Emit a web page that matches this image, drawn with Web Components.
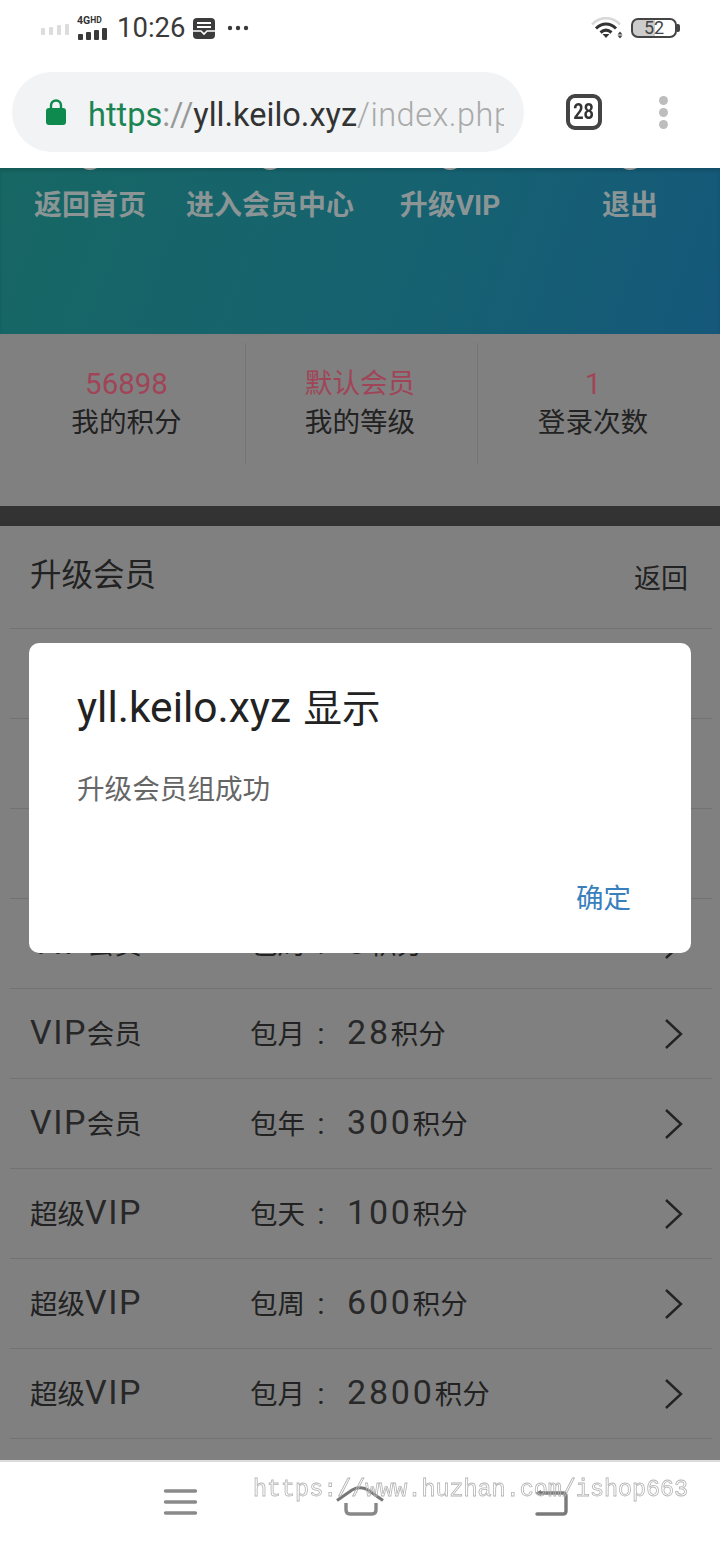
<!DOCTYPE html>
<html lang="zh">
<head>
<meta charset="utf-8">
<title>升级会员</title>
<style>
  html, body { margin: 0; padding: 0; background: #fff; }
  body {
    width: 720px;
    height: 1544px;
    overflow: hidden;
    font-family: Roboto, "Noto Sans CJK SC", sans-serif;
  }
  app-shell { color: #222; }
</style>
</head>
<body>
<app-shell>
  <status-bar slot="top"></status-bar>
  <url-bar slot="top"></url-bar>

  <member-banner>
    <banner-link>返回首页</banner-link>
    <banner-link>进入会员中心</banner-link>
    <banner-link>升级VIP</banner-link>
    <banner-link>退出</banner-link>
  </member-banner>

  <stat-panel>
    <stat-item value="56898" latin>我的积分</stat-item>
    <stat-item value="默认会员">我的等级</stat-item>
    <stat-item value="1" latin>登录次数</stat-item>
  </stat-panel>

  <plan-list>
    <plan-row empty></plan-row>
    <plan-row empty></plan-row>
    <plan-row empty></plan-row>
    <plan-row tier="VIP" suffix="会员" period="包周" points="8"></plan-row>
    <plan-row tier="VIP" suffix="会员" period="包月" points="28"></plan-row>
    <plan-row tier="VIP" suffix="会员" period="包年" points="300"></plan-row>
    <plan-row prefix="超级" tier="VIP" period="包天" points="100"></plan-row>
    <plan-row prefix="超级" tier="VIP" period="包周" points="600"></plan-row>
    <plan-row prefix="超级" tier="VIP" period="包月" points="2800"></plan-row>
  </plan-list>

  <alert-dialog slot="over" host="yll.keilo.xyz" label="显示" action="确定">升级会员组成功</alert-dialog>
  <bottom-nav slot="bottom"></bottom-nav>
</app-shell>

<script>
class AppShell extends HTMLElement {
  constructor() {
    super();
    this.attachShadow({ mode: "open" });
    this.shadowRoot.innerHTML = `
      <style>
        :host { display: flex; flex-direction: column; width: 720px; height: 1544px; position: relative; }
        #page { flex: 1; background: #808080; overflow: hidden; }
      </style>
      <slot name="top"></slot>
      <div id="page"><slot></slot></div>
      <slot name="over"></slot>
      <slot name="bottom"></slot>
    `;
  }
}

class StatusBar extends HTMLElement {
  constructor() {
    super();
    this.attachShadow({ mode: "open" });
    this.shadowRoot.innerHTML = `
      <style>
        :host { display: flex; align-items: center; justify-content: space-between; height: 56px; padding: 0 40px 0 41px; background: #fff; }
        .side { display: flex; align-items: center; }
        #net { display: flex; flex-direction: column; align-items: flex-start; margin-left: 8px; margin-top: -2px; }
        #label { font: 700 10.500px/10px Roboto, sans-serif; color: #333; margin-bottom: 2px; }
        #label small { font-size: 8.500px; vertical-align: 1px; }
        #time { font: 400 27.500px/32px Roboto, sans-serif; color: #3a3a3a; margin-left: 10px; }
        svg { display: block; }
      </style>
      <div class="side">
        <svg style="margin-top:3px" width="28" height="11" viewBox="0 0 28 11"><g fill="#dcdcdc"><rect x="0" y="4" width="4" height="7" rx="1"/><rect x="8" y="3" width="4" height="8" rx="1"/><rect x="16" y="1" width="4" height="10" rx="1"/><rect x="24" y="0" width="4" height="11" rx="1"/></g></svg>
        <div id="net">
          <span id="label">4G<small>HD</small></span>
          <svg width="30" height="12" viewBox="0 0 30 12"><g fill="#3a3a3a"><rect x="1" y="6" width="5" height="6" rx="1"/><rect x="9" y="4" width="5" height="8" rx="1"/><rect x="17" y="2" width="5" height="10" rx="1"/><rect x="25" y="0" width="5" height="12" rx="1"/></g></svg>
        </div>
        <span id="time">10:26</span>
        <svg style="margin-left:8px" width="22" height="21" viewBox="0 0 22 21"><rect width="22" height="21" rx="4" fill="#3c3c3c"/><path d="M4 5h14M4 9h14" stroke="#fff" stroke-width="2"/><path d="M0 13h8l3 3 3-3h8" fill="none" stroke="#fff" stroke-width="1.600"/></svg>
        <svg style="margin-left:12px" width="22" height="6" viewBox="0 0 22 6"><g fill="#3a3a3a"><circle cx="3" cy="3" r="2.200"/><circle cx="11" cy="3" r="2.200"/><circle cx="19" cy="3" r="2.200"/></g></svg>
      </div>
      <div class="side">
        <svg width="33" height="22" viewBox="0 0 33 22">
          <path d="M1 7.500C9-1 21-1 29 7.500" fill="none" stroke="#d8d8d8" stroke-width="2.500"/>
          <path d="M5 11.500C11 5.500 19 5.500 25 11.500" fill="none" stroke="#333" stroke-width="3"/>
          <path d="M9.500 15.500C13 12.500 17 12.500 20.500 15.500" fill="none" stroke="#333" stroke-width="3"/>
          <path d="M11.500 17h7L15 21z" fill="#333"/>
          <path d="M29 14.500l2.500 3h-5zM29 21.500l2.500-3h-5z" fill="#444"/>
        </svg>
        <bat-level level="52" style="margin-left:7px"></bat-level>
      </div>
    `;
  }
}

class BatLevel extends HTMLElement {
  constructor() {
    super();
    this.attachShadow({ mode: "open" });
    this.shadowRoot.innerHTML = `
      <style>
        :host { display: flex; align-items: center; }
        #box { box-sizing: border-box; width: 46px; height: 20px; border: 2px solid #444; border-radius: 7px; overflow: hidden; text-align: center; font: 400 18px/16px Roboto, sans-serif; color: #444; background: linear-gradient(90deg, #ccc 52%, #fff 52%); }
        #nub { width: 3px; height: 8px; background: #444; border-radius: 0 2px 2px 0; }
      </style>
      <div id="box">${this.getAttribute("level")}</div><div id="nub"></div>
    `;
  }
}

class UrlBar extends HTMLElement {
  constructor() {
    super();
    this.attachShadow({ mode: "open" });
    this.shadowRoot.innerHTML = `
      <style>
        :host { display: flex; align-items: center; height: 112px; padding: 0 0 0 12px; background: #fff; }
        #pill { box-sizing: border-box; width: 512px; height: 80px; border-radius: 40px; background: #f1f3f4; display: flex; align-items: center; padding: 0 20px 0 34px; }
        #url { margin: 6px 0 0 22px; flex: 1; overflow: hidden; white-space: nowrap; font: 300 32.500px/44px Roboto, sans-serif; letter-spacing: .5px; color: #aaa; }
        #url b { font-weight: 400; color: #1b8453; letter-spacing: 0; }
        #url i { font-style: normal; font-weight: 400; color: #999; letter-spacing: 0; }
        #url em { font-style: normal; font-weight: 400; color: #333; letter-spacing: 0; }
        #tabs { box-sizing: border-box; width: 36px; height: 36px; margin: -1px 0 0 42px; border: 4px solid #444; border-radius: 9px; display: flex; align-items: center; justify-content: center; font: 700 22px/1 Roboto, sans-serif; color: #333; }
        #tabs span { display: block; transform: scaleX(.82); }
        #more { margin: 0 0 0 57px; display: flex; flex-direction: column; gap: 3px; }
        #more span { width: 9px; height: 9px; border-radius: 50%; background: #bdbdbd; }
        svg { display: block; flex: none; }
      </style>
      <div id="pill">
        <svg width="20" height="26" viewBox="0 0 20 26"><path d="M5 10V6.500a5 5 0 0 1 10 0V10" fill="none" stroke="#0f8a4e" stroke-width="2.400"/><rect y="9" width="20" height="17" rx="3" fill="#0f8a4e"/></svg>
        <div id="url"><b>https</b><i>://</i><em>yll.keilo.xyz</em>/index.php</div>
      </div>
      <div id="tabs"><span>28</span></div>
      <div id="more"><span></span><span></span><span></span></div>
    `;
  }
}

class MemberBanner extends HTMLElement {
  constructor() {
    super();
    this.attachShadow({ mode: "open" });
    this.shadowRoot.innerHTML = `
      <style>
        :host { display: grid; grid-template-columns: repeat(4, 180px); height: 166px; overflow: hidden; background: linear-gradient(110deg, #176764 0%, #166270 55%, #15587a 100%); box-shadow: inset 0 3px 3px rgba(0,0,0,.12); }
      </style>
      <slot></slot>
    `;
  }
}

class BannerLink extends HTMLElement {
  constructor() {
    super();
    this.attachShadow({ mode: "open" });
    this.shadowRoot.innerHTML = `
      <style>
        :host { display: flex; flex-direction: column; align-items: center; font: 700 28px/40px Roboto, "Noto Sans CJK SC", sans-serif; color: #8b9596; white-space: nowrap; }
        #dot { width: 26px; height: 26px; margin-top: -24px; margin-bottom: 16px; border-radius: 50%; background: #9a9a9a; }
      </style>
      <div id="dot"></div>
      <slot></slot>
    `;
  }
}

class StatPanel extends HTMLElement {
  constructor() {
    super();
    this.attachShadow({ mode: "open" });
    this.shadowRoot.innerHTML = `
      <style>
        :host { display: grid; grid-template-columns: 238px 232px 1fr; height: 121px; padding: 9px 12px 42px 8px; background: #808080; border-bottom: 20px solid #333; }
      </style>
      <slot></slot>
    `;
  }
}

class StatItem extends HTMLElement {
  constructor() {
    super();
    this.attachShadow({ mode: "open" });
    const size = this.hasAttribute("latin") ? "29.500px" : "27.600px";
    this.shadowRoot.innerHTML = `
      <style>
        :host { display: flex; flex-direction: column; align-items: center; padding: 20px 3px 0 0; box-sizing: border-box; border-right: 1px solid #747474; font: 400 27.600px/40px Roboto, "Noto Sans CJK SC", sans-serif; color: #222; }
        :host(:first-child), :host(:last-child) { padding-right: 0; }
        :host(:last-child) { border-right: 0; }
        #value { color: #a04558; font-size: ${size}; margin-top: 1px; margin-bottom: -1px; }
      </style>
      <div id="value">${this.getAttribute("value")}</div>
      <div><slot></slot></div>
    `;
  }
}

class PlanList extends HTMLElement {
  constructor() {
    super();
    this.attachShadow({ mode: "open" });
    this.shadowRoot.innerHTML = `
      <style>
        :host { display: block; padding: 0 8px 0 10px; }
        header { display: flex; justify-content: space-between; height: 103px; box-sizing: border-box; padding: 29px 24px 0 20px; border-bottom: 1px solid #727272; color: #222; }
        h2 { margin: 0; font: 400 31.500px/42px Roboto, "Noto Sans CJK SC", sans-serif; }
        a { font: 400 27px/48px Roboto, "Noto Sans CJK SC", sans-serif; }
      </style>
      <header><h2>升级会员</h2><a>返回</a></header>
      <slot></slot>
    `;
  }
}

class PlanRow extends HTMLElement {
  constructor() {
    super();
    this.attachShadow({ mode: "open" });
    const attr = (n) => this.getAttribute(n) || "";
    const full = !this.hasAttribute("empty");
    this.shadowRoot.innerHTML = `
      <style>
        :host { display: flex; align-items: center; box-sizing: border-box; height: 90px; padding: 0 28px 0 20px; border-bottom: 1px solid #727272; font: 400 27.500px/40px Roboto, "Noto Sans CJK SC", sans-serif; color: #222; }
        #name { width: 220px; white-space: nowrap; }
        #price { flex: 1; white-space: nowrap; }
        .tier, .pts { font-size: 34px; font-weight: 400; color: #282828; }
        .tier { letter-spacing: 1.500px; }
        .pts { letter-spacing: 2.800px; }
        .colon { display: inline-block; width: 32px; margin-right: 10px; text-align: center; font-size: 30px; }
        svg { display: block; }
      </style>
      ${full ? `
      <div id="name">${attr("prefix")}<span class="tier">${attr("tier")}</span>${attr("suffix")}</div>
      <div id="price">${attr("period")}<span class="colon">:</span><span class="pts">${attr("points")}</span>积分</div>
      <svg width="20" height="32" viewBox="0 0 20 32"><path d="M2 2l15 14L2 30" fill="none" stroke="#222" stroke-width="2.400"/></svg>
      ` : ""}
    `;
  }
}

class AlertDialog extends HTMLElement {
  constructor() {
    super();
    this.attachShadow({ mode: "open" });
    this.shadowRoot.innerHTML = `
      <style>
        :host { position: absolute; left: 29px; top: 643px; box-sizing: border-box; width: 662px; height: 310px; padding: 40px 60px 0 48px; display: flex; flex-direction: column; background: #fff; border-radius: 10px; }
        h1 { margin: 0; font: 400 42.500px/50px Roboto, "Noto Sans CJK SC", sans-serif; color: #222; white-space: nowrap; }
        h1 span { font-size: 38.500px; margin-left: 2px; }
        #msg { margin-top: 36px; font: 400 27.600px/40px Roboto, "Noto Sans CJK SC", sans-serif; color: #666; }
        #actions { margin-top: auto; padding-bottom: 34px; display: flex; justify-content: flex-end; }
        #actions span { font: 400 27.500px/40px Roboto, "Noto Sans CJK SC", sans-serif; color: #3a7fbd; }
      </style>
      <h1>${this.getAttribute("host")} <span>${this.getAttribute("label")}</span></h1>
      <div id="msg"><slot></slot></div>
      <div id="actions"><span>${this.getAttribute("action")}</span></div>
    `;
  }
}

class BottomNav extends HTMLElement {
  constructor() {
    super();
    this.attachShadow({ mode: "open" });
    this.shadowRoot.innerHTML = `
      <style>
        :host { display: flex; align-items: flex-start; position: relative; height: 84px; padding: 21px 0 0 162px; box-sizing: border-box; background: #fff; border-top: 2px solid #dcdcdc; }
        svg { display: block; }
        #home { margin-left: 136px; margin-top: 3px; }
        #back { margin-left: 149px; margin-top: 7px; }
        #mark { position: absolute; left: 253px; top: 14px; font: 400 23.400px/28px "Liberation Mono", monospace; white-space: nowrap; color: transparent; -webkit-text-stroke: .8px #b4b4b4; filter: grayscale(1); }
      </style>
      <svg style="margin-top:5px" width="37" height="28" viewBox="0 0 37 28"><path d="M3.500 3h30M3.500 14h30M3.500 25h30" stroke="#8a8a8a" stroke-width="3.400" stroke-linecap="round"/></svg>
      <svg id="home" width="50" height="30" viewBox="0 0 50 30"><path d="M2 14.500L17 4Q25-.5 33 4L48 14.500" fill="none" stroke="#777" stroke-width="3"/><path d="M11 17v7q0 4 4 4h22q4 0 4-4v-7" fill="none" stroke="#888" stroke-width="3.400"/></svg>
      <svg id="back" width="34" height="26" viewBox="0 0 34 26"><path d="M1 3l6-3v6z" fill="#7a7a7a"/><path d="M6 3h23q3 0 3 3v15q0 3-3 3H3" fill="none" stroke="#7a7a7a" stroke-width="3.400" stroke-linecap="round"/></svg>
      <div id="mark">https://www.huzhan.com/ishop663</div>
    `;
  }
}

customElements.define("app-shell", AppShell);
customElements.define("bat-level", BatLevel);
customElements.define("status-bar", StatusBar);
customElements.define("url-bar", UrlBar);
customElements.define("member-banner", MemberBanner);
customElements.define("banner-link", BannerLink);
customElements.define("stat-panel", StatPanel);
customElements.define("stat-item", StatItem);
customElements.define("plan-list", PlanList);
customElements.define("plan-row", PlanRow);
customElements.define("alert-dialog", AlertDialog);
customElements.define("bottom-nav", BottomNav);
</script>
</body>
</html>
